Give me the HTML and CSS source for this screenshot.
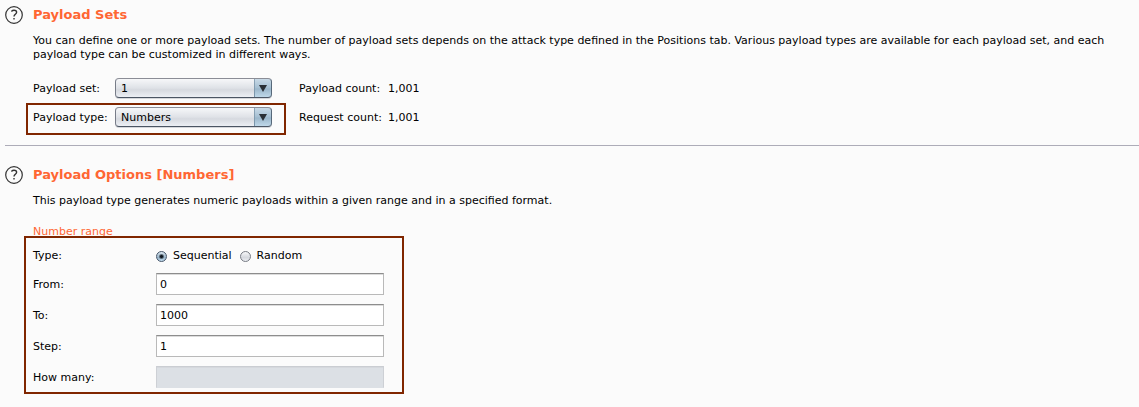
FILE: index.html
```html
<!DOCTYPE html>
<html lang="en">
<head>
<meta charset="utf-8">
<title>Payloads</title>
<link rel="stylesheet" href="styles.css">
</head>
<body>
<main>
  <section class="section">
    <button class="help" type="button" aria-label="Help: payload sets">
      <svg viewBox="0 0 18 18" width="18" height="18" fill="none" stroke="#333" aria-hidden="true"><circle cx="9" cy="9" r="8.3" stroke-width="1.2"/><path d="M6.4 5.4C7.2 4.6 8.1 4.3 9 4.3c1.5 0 2.6.8 2.6 2 0 2-2.6 2.1-2.6 4.3M9 12v1.6" stroke-width="1.4"/></svg>
    </button>
    <h2 class="title">Payload Sets</h2>
    <div class="content">
      <p class="text">You can define one or more payload sets. The number of payload sets depends on the attack type defined in the Positions tab. Various payload types are available for each payload set, and each payload type can be customized in different ways.</p>
      <div class="sets">
        <div class="set-row">
          <div class="set-field framed framed-type">
            <label class="label" for="set">Payload set:</label>
            <span class="combo"><select id="set"><option>1</option></select></span>
          </div>
          <span class="label count-label">Payload count:</span><span class="label">1,001</span>
        </div>
        <div class="set-row">
          <div class="set-field framed framed-type is-marked">
            <label class="label" for="type">Payload type:</label>
            <span class="combo"><select id="type"><option>Numbers</option></select></span>
          </div>
          <span class="label count-label">Request count:</span><span class="label">1,001</span>
        </div>
      </div>
    </div>
  </section>
  <hr class="divider">
  <section class="section">
    <button class="help" type="button" aria-label="Help: payload options">
      <svg viewBox="0 0 18 18" width="18" height="18" fill="none" stroke="#333" aria-hidden="true"><circle cx="9" cy="9" r="8.3" stroke-width="1.2"/><path d="M6.4 5.4C7.2 4.6 8.1 4.3 9 4.3c1.5 0 2.6.8 2.6 2 0 2-2.6 2.1-2.6 4.3M9 12v1.6" stroke-width="1.4"/></svg>
    </button>
    <h2 class="title">Payload Options [Numbers]</h2>
    <div class="content">
      <p class="text">This payload type generates numeric payloads within a given range and in a specified format.</p>
      <h3 class="subtitle">Number range</h3>
      <form class="options framed framed-range is-marked">
        <div class="option-row" role="radiogroup" aria-labelledby="order">
          <span class="label" id="order">Type:</span>
          <div class="choices">
            <label class="label choice"><input type="radio" name="order" checked>Sequential</label>
            <label class="label choice"><input type="radio" name="order">Random</label>
          </div>
        </div>
        <div class="option-row"><label class="label" for="from">From:</label><input class="field" id="from" type="text" value="0"></div>
        <div class="option-row"><label class="label" for="to">To:</label><input class="field" id="to" type="text" value="1000"></div>
        <div class="option-row"><label class="label" for="step">Step:</label><input class="field" id="step" type="text" value="1"></div>
        <div class="option-row"><label class="label" for="many">How many:</label><input class="field" id="many" type="text" disabled></div>
      </form>
    </div>
  </section>
</main>
</body>
</html>
```
FILE: styles.css
```css
* {
  box-sizing: border-box;
}

body {
  margin: 0;
  background: #fbfbfb;
  color: #000;
  font: 11px/14px "DejaVu Sans", sans-serif;
}

input,
select,
button {
  font: inherit;
  color: inherit;
}

main {
  padding: 6px 0 12px 5px;
}

.section {
  display: grid;
  grid-template-columns: 18px 1fr;
  column-gap: 10px;
  row-gap: 10px;
}

.help {
  display: block;
  width: 18px;
  height: 18px;
  padding: 0;
  border: 0;
  background: none;
}

.help svg {
  display: block;
}

.title {
  margin: 0;
  color: #ff6633;
  font-size: 13px;
  line-height: 18px;
}

.content {
  grid-column: 2;
  padding-right: 16px;
}

.text {
  margin: 0;
}

.label {
  padding-top: 2px;
}

.sets {
  display: flex;
  flex-direction: column;
  gap: 9px;
  margin-top: 16px;
}

.set-row {
  display: flex;
  align-items: center;
}

.set-field {
  display: grid;
  grid-template-columns: 82px 157px;
  align-items: center;
  margin-right: 27px;
}

.count-label {
  width: 89px;
}

.combo {
  position: relative;
  display: block;
}

.combo::after {
  content: "";
  position: absolute;
  top: 7px;
  right: 5px;
  border: solid transparent;
  border-width: 7px 4px 0;
  border-top-color: #2a2f35;
  pointer-events: none;
}

.combo select {
  display: block;
  width: 100%;
  height: 20px;
  padding: 2px 20px 0 5px;
  appearance: none;
  border: 1px solid;
  border-color: #8b8d96 #566879 #4b5563 #777c88;
  border-radius: 4px;
  background:
    linear-gradient(#c9dae7, #a5bfd2 50%, #9bb6ca 55%, #bfd8e9) right / 16px 100% no-repeat,
    linear-gradient(#8da5b8, #7893a8) right 16px top / 1px 100% no-repeat,
    linear-gradient(#f6f7f9, #dfe2e7 50%, #d6d9df 60%, #eceff4);
  box-shadow: 0 1px 0 #d5d7db;
}

.divider {
  height: 1px;
  margin: 18px 0 20px;
  border: 0;
  background: #adacb8;
}

.subtitle {
  margin: 17px 0 7px;
  color: #ff6633;
  font-size: 11px;
  font-weight: normal;
}

.options {
  display: flex;
  flex-direction: column;
  gap: 9px;
  width: 351px;
}

.option-row {
  display: grid;
  grid-template-columns: 123px 1fr;
  align-items: center;
}

.choices {
  display: flex;
  gap: 8px;
  height: 18px;
}

.choice {
  display: flex;
  align-items: center;
  gap: 6px;
}

.choice input {
  width: 11px;
  height: 11px;
  margin: 0;
  appearance: none;
  border: 1px solid #777b84;
  border-radius: 50%;
  background: linear-gradient(#f7f8fa, #d5d8de 60%, #eceef2);
}

.choice input:checked {
  border-color: #46566a;
  background:
    radial-gradient(circle, #101820 1px, transparent 3px),
    linear-gradient(#dce8f1, #98b3c8 60%, #c0dbee);
}

.field {
  width: 100%;
  height: 22px;
  padding: 0 3px;
  border: 1px solid #b9b9b9;
  border-top-color: #8d8d8d;
  border-radius: 0;
  background: #fff;
  box-shadow: inset 0 1px 0 #dcdcdc;
}

.field:disabled {
  border-color: #cacdd2 #cdd0d5 #dce0e5;
  background: #dce0e5;
  box-shadow: inset 0 1px 0 #d5d8dd;
}

/* Annotation frames drawn over the highlighted settings. */
.framed {
  position: relative;
}

.is-marked::after {
  content: "";
  position: absolute;
  border: 2px solid #802600;
  pointer-events: none;
}

.framed-type::after {
  inset: -4px -14px -8px -7px;
}

.framed-range::after {
  inset: -10px -20px -6px -9px;
}
```
